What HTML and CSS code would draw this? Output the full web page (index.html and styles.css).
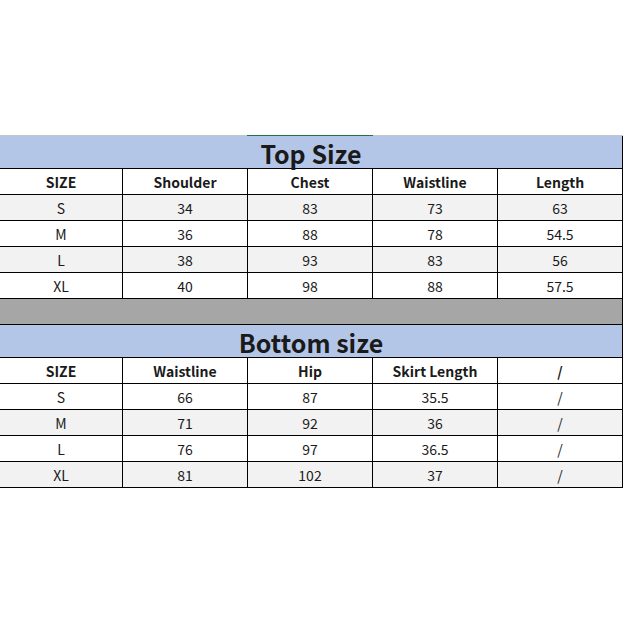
FILE: index.html
```html
<!DOCTYPE html>
<html>
<head>
<meta charset="utf-8">
<link rel="stylesheet" href="styles.css">
</head>
<body>
<div class="sheet">
  <div class="topline"><span class="sel"></span></div>
  <div class="frame">
    <div class="title">Top Size</div>
    <div class="row head"><div>SIZE</div><div>Shoulder</div><div>Chest</div><div>Waistline</div><div>Length</div></div>
    <div class="row alt"><div>S</div><div>34</div><div>83</div><div>73</div><div>63</div></div>
    <div class="row"><div>M</div><div>36</div><div>88</div><div>78</div><div>54.5</div></div>
    <div class="row alt"><div>L</div><div>38</div><div>93</div><div>83</div><div>56</div></div>
    <div class="row"><div>XL</div><div>40</div><div>98</div><div>88</div><div>57.5</div></div>
    <div class="gap"></div>
    <div class="title">Bottom size</div>
    <div class="row head"><div>SIZE</div><div>Waistline</div><div>Hip</div><div>Skirt Length</div><div>/</div></div>
    <div class="row"><div>S</div><div>66</div><div>87</div><div>35.5</div><div>/</div></div>
    <div class="row alt"><div>M</div><div>71</div><div>92</div><div>36</div><div>/</div></div>
    <div class="row"><div>L</div><div>76</div><div>97</div><div>36.5</div><div>/</div></div>
    <div class="row alt"><div>XL</div><div>81</div><div>102</div><div>37</div><div>/</div></div>
  </div>
</div>
</body>
</html>
```
FILE: styles.css
```css
html, body {
  margin: 0;
  padding: 0;
  background: #ffffff;
}
body {
  font-family: "Noto Sans CJK SC", "Noto Sans", sans-serif;
  color: #1a1a1a;
}
.sheet {
  padding-top: 135px;
  width: 623px;
}
.topline {
  height: 1px;
  background: #c6c6c6;
  display: flex;
  padding-left: 247px;
}
.sel {
  width: 126px;
  height: 1px;
  background: #217346;
}
.frame {
  border-right: 1px solid #000;
  width: 622px;
}
.title {
  background: #b4c6e7;
  border-bottom: 1px solid #000;
  display: flex;
  align-items: center;
  justify-content: center;
  font-size: 25px;
  font-weight: 700;
  line-height: 30px;
  padding-top: 2px;
  height: 30px;
}
.row {
  display: grid;
  grid-template-columns: 123px 125px 125px 125px 124px;
  height: 26px;
  background: #ffffff;
}
.row.alt {
  background: #f2f2f2;
}
.row > div {
  border-bottom: 1px solid #000;
  border-right: 1px solid #000;
  display: flex;
  align-items: center;
  justify-content: center;
  font-size: 14px;
  line-height: 24px;
  height: 24px;
  padding-top: 1px;
}
.row > div:last-child {
  border-right: none;
}
.row.head > div {
  font-weight: 700;
}
.gap {
  height: 25px;
  background: #a6a6a6;
  border-bottom: 1px solid #000;
}
```
